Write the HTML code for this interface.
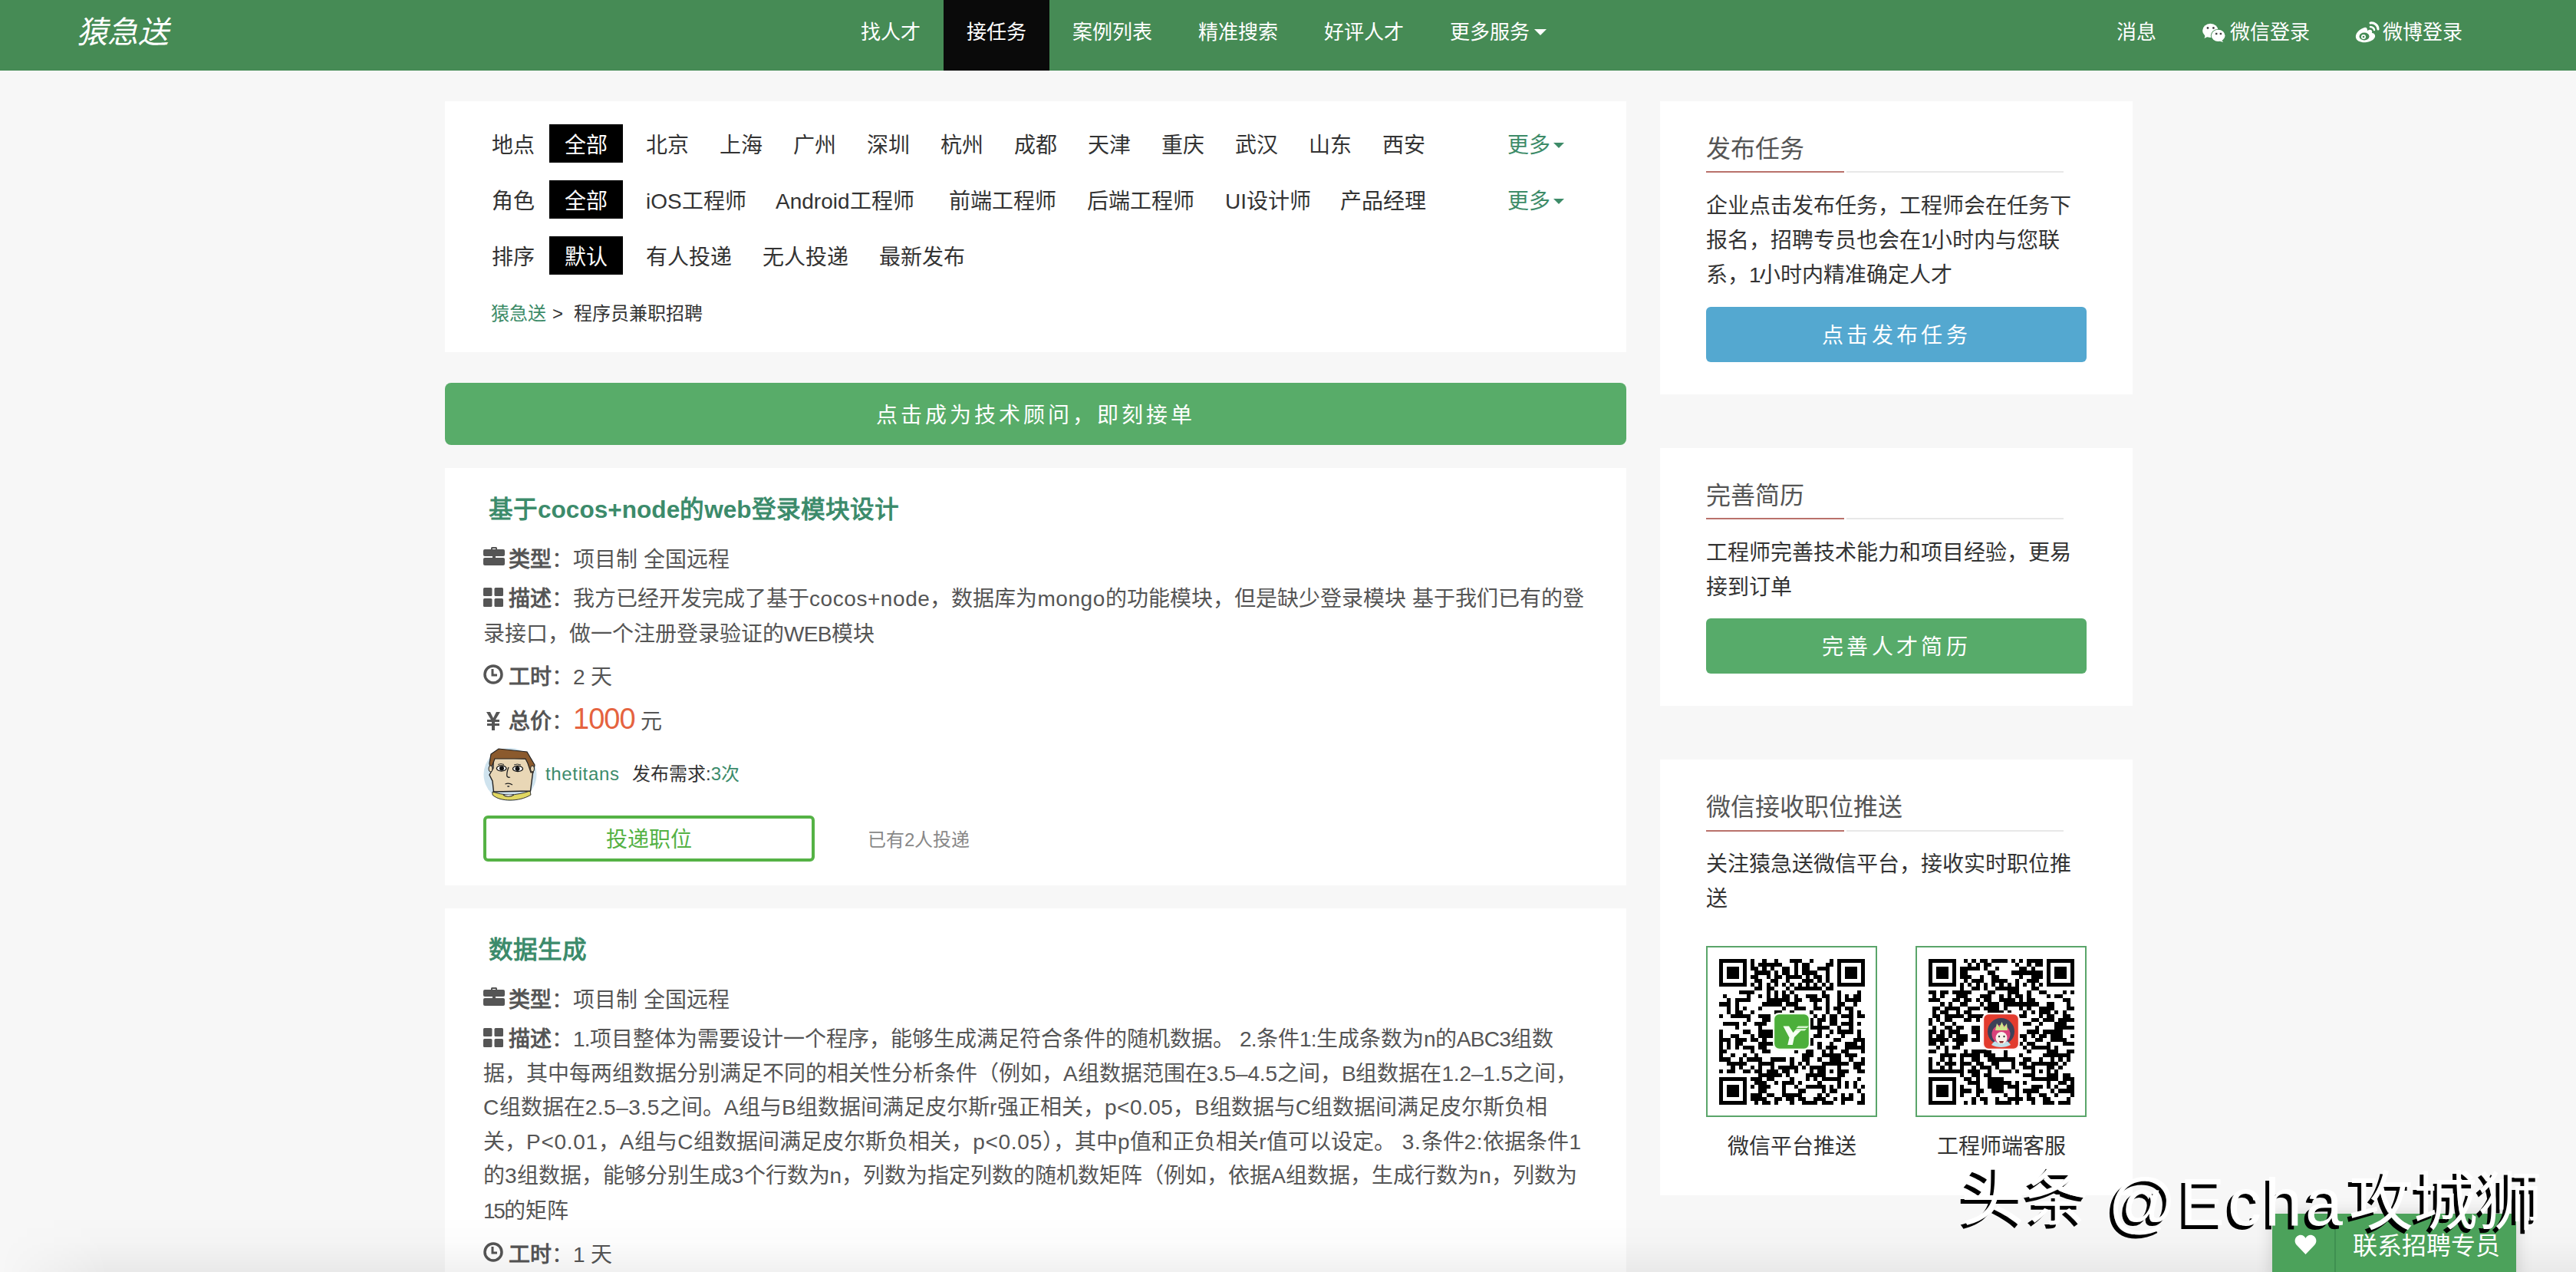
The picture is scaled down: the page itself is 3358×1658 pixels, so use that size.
<!DOCTYPE html>
<html lang="zh-CN">
<head>
<meta charset="utf-8">
<title>猿急送</title>
<style>
*{margin:0;padding:0;box-sizing:border-box}
html,body{width:3358px;height:1658px;overflow:hidden}
body{position:relative;background:#f7f7f7;font-family:"Liberation Sans",sans-serif;color:#333;font-size:28px}
.abs{position:absolute;white-space:nowrap}
#nav{position:absolute;left:0;top:0;width:3358px;height:92px;background:#468b55}
#logo{left:100px;top:12px;font-size:40px;line-height:60px;color:#fff;font-style:italic;font-weight:500}
.ni{position:absolute;top:0;height:92px;line-height:85px;font-size:26px;color:#fff;padding:0 30px}
.ni.act{background:#0a0a0a}
.caret{display:inline-block;width:0;height:0;border-left:8px solid transparent;border-right:8px solid transparent;border-top:8px solid #fff;vertical-align:middle;margin-left:6px;position:relative;top:-2px}
.card{position:absolute;background:#fff}
.fl{position:absolute;height:50px;line-height:56px;font-size:28px;color:#333}
.fl.act{background:#000;color:#fff;padding:0 20px}
.more{color:#3d8b68}
.more .caret{border-top-color:#3d8b68;border-left-width:7px;border-right-width:7px;border-top-width:7px;margin-left:4px}
#banner{position:absolute;left:580px;top:499px;width:1540px;height:81px;background:#58ac69;border-radius:8px;color:#fff;text-align:center;line-height:85px;font-size:28px;letter-spacing:4px}
.title{position:absolute;font-size:31.6px;font-weight:bold;color:#3c8b6b;white-space:nowrap}
.row{position:absolute;font-size:28px;color:#555;white-space:nowrap;line-height:44.8px}
.row b{color:#555}
.ln{position:absolute;font-size:28px;color:#555;line-height:44.8px;white-space:nowrap}
.ico{display:inline-block;vertical-align:middle;position:relative}
.price{color:#e5633f;font-size:38px;letter-spacing:-1px}
.side-t{position:absolute;left:60px;font-size:32px;color:#555;white-space:nowrap}
.side-l{position:absolute;left:60px;width:466px;height:2px;background:linear-gradient(to right,transparent 183px,#e8e8e8 183px)}
.side-l i{position:absolute;left:0;top:0;width:180px;height:2px;background:#b9716b}
.side-b{position:absolute;left:60px;width:490px;font-size:28px;line-height:45px;color:#333}
.wm{font-size:84px;line-height:110px;color:#fff;font-weight:400;text-shadow:-5px 5px 0 #000}
.btn{position:absolute;left:60px;width:496px;height:72px;border-radius:6px;color:#fff;text-align:center;line-height:76px;font-size:28px;letter-spacing:4.4px}
</style>
</head>
<body>
<div id="nav">
  <div id="logo" class="abs">猿急送</div>
  <div class="ni" style="left:1092px">找人才</div>
  <div class="ni act" style="left:1230px">接任务</div>
  <div class="ni" style="left:1368px">案例列表</div>
  <div class="ni" style="left:1532px">精准搜索</div>
  <div class="ni" style="left:1696px">好评人才</div>
  <div class="ni" style="left:1860px">更多服务<span class="caret"></span></div>
  <div class="ni" style="left:2729px">消息</div>
  <div class="ni" style="left:2841px"><svg class="ico" width="32" height="28" viewBox="0 0 32 28" style="top:-2px;margin-right:4px"><ellipse cx="10.4" cy="11.9" rx="10.3" ry="9.1" fill="#fff"/><path d="M4 17l-1.5 5 6-3z" fill="#fff"/><circle cx="7" cy="8.5" r="1.4" fill="#444"/><circle cx="14.4" cy="8.5" r="1.4" fill="#444"/><ellipse cx="20.6" cy="18.4" rx="9.8" ry="8.4" fill="#468b55"/><ellipse cx="20.6" cy="18.4" rx="8.9" ry="7.7" fill="#fff"/><path d="M25 24l2.2 3-5-1.6z" fill="#fff"/><rect x="17" y="14.8" width="2.4" height="2.4" fill="#444"/><rect x="22.7" y="14.8" width="2.4" height="2.4" fill="#444"/></svg>微信登录</div>
  <div class="ni" style="left:3039px"><svg class="ico" width="34" height="28" viewBox="0 0 34 28" style="top:-2px;margin-right:3px"><path d="M13 8C6 10 1 16 2 21c1 5 8 7 14 6 7-1 12-5 11-9-.5-2-2-3-4-3 1-3-1-5-4-4l-2 1c0-3-1-5-4-4z" fill="#fff"/><ellipse cx="13" cy="19.5" rx="6.5" ry="5" fill="#468b55"/><circle cx="12" cy="20" r="3" fill="#fff"/><circle cx="12" cy="20" r="1.3" fill="#468b55"/><path d="M21 2c5-1 10 3 10 8" stroke="#fff" stroke-width="3" fill="none" stroke-linecap="round"/><path d="M21 7c2.5 0 5 2 5 4" stroke="#fff" stroke-width="2.5" fill="none" stroke-linecap="round"/></svg>微博登录</div>
</div>

<!-- filter panel -->
<div class="card" style="left:580px;top:132px;width:1540px;height:327px"></div>
<div class="fl" style="left:641px;top:162px">地点</div>
<div class="fl act" style="left:716px;top:162px">全部</div>
<div class="fl" style="left:842px;top:162px">北京</div>
<div class="fl" style="left:938px;top:162px">上海</div>
<div class="fl" style="left:1034px;top:162px">广州</div>
<div class="fl" style="left:1130px;top:162px">深圳</div>
<div class="fl" style="left:1226px;top:162px">杭州</div>
<div class="fl" style="left:1322px;top:162px">成都</div>
<div class="fl" style="left:1418px;top:162px">天津</div>
<div class="fl" style="left:1514px;top:162px">重庆</div>
<div class="fl" style="left:1610px;top:162px">武汉</div>
<div class="fl" style="left:1706px;top:162px">山东</div>
<div class="fl" style="left:1802px;top:162px">西安</div>
<div class="fl more" style="left:1965px;top:162px">更多<span class="caret"></span></div>

<div class="fl" style="left:641px;top:235px">角色</div>
<div class="fl act" style="left:716px;top:235px">全部</div>
<div class="fl" style="left:842px;top:235px">iOS工程师</div>
<div class="fl" style="left:1011px;top:235px">Android工程师</div>
<div class="fl" style="left:1237px;top:235px">前端工程师</div>
<div class="fl" style="left:1417px;top:235px">后端工程师</div>
<div class="fl" style="left:1597px;top:235px">UI设计师</div>
<div class="fl" style="left:1747px;top:235px">产品经理</div>
<div class="fl more" style="left:1965px;top:235px">更多<span class="caret"></span></div>

<div class="fl" style="left:641px;top:308px">排序</div>
<div class="fl act" style="left:716px;top:308px">默认</div>
<div class="fl" style="left:842px;top:308px">有人投递</div>
<div class="fl" style="left:994px;top:308px">无人投递</div>
<div class="fl" style="left:1146px;top:308px">最新发布</div>

<div class="abs" style="left:640px;top:392px;font-size:24px;line-height:34px;color:#3d8b68">猿急送</div><div class="abs" style="left:720px;top:392px;font-size:24px;line-height:34px;color:#333">&gt;</div><div class="abs" style="left:748px;top:392px;font-size:24px;line-height:34px;color:#333">程序员兼职招聘</div>

<div id="banner">点击成为技术顾问，即刻接单</div>

<!-- job card 1 -->
<div class="card" style="left:580px;top:610px;width:1540px;height:544px"></div>
<div class="title" style="left:637px;top:638px">基于cocos+node的web登录模块设计</div>
<div class="row" style="left:630px;top:708px"><svg class="ico" width="28" height="25" viewBox="0 0 28 25" style="top:-7px;margin-right:5px"><path d="M10 4V2.5C10 1.5 10.8 1 11.8 1h4.4c1 0 1.8.5 1.8 1.5V4h-2V3h-4v1z" fill="#555"/><rect x="0" y="4" width="28" height="9" rx="2" fill="#555"/><rect x="0" y="15" width="28" height="10" rx="2" fill="#555"/><rect x="12" y="11" width="4" height="5" fill="#555"/></svg><b>类型</b>：项目制 全国远程</div>
<div class="ln" style="left:630px;top:759px"><svg class="ico" width="26" height="25" viewBox="0 0 26 25" style="top:-4px;margin-right:7px"><rect x="0" y="0" width="11.5" height="11" rx="1.5" fill="#555"/><rect x="14.5" y="0" width="11.5" height="11" rx="1.5" fill="#555"/><rect x="0" y="14" width="11.5" height="11" rx="1.5" fill="#555"/><rect x="14.5" y="14" width="11.5" height="11" rx="1.5" fill="#555"/></svg><b>描述</b>：<span id="c1l1">我方已经开发完成了基于<span style="letter-spacing:0.562px">cocos+node</span>，数据库为<span style="letter-spacing:0.562px">mongo</span>的功能模块，但是缺少登录模块<span style="letter-spacing:0.562px"> </span>基于我们已有的登</span></div>
<div class="ln" id="c1l2" style="left:630px;top:805px">录接口，做一个注册登录验证的<span style="letter-spacing:-0.667px">WEB</span>模块</div>
<div class="row" style="left:630px;top:861px"><svg class="ico" width="26" height="26" viewBox="0 0 26 26" style="top:-6px;margin-right:7px"><circle cx="13" cy="13" r="11" stroke="#555" stroke-width="3.5" fill="none"/><path d="M12 6v8h6" stroke="#555" stroke-width="3" fill="none"/></svg><b>工时</b>：2 天</div>
<div class="row" style="left:630px;top:915px"><svg class="ico" width="26" height="26" viewBox="0 0 26 26" style="top:-3px;margin-right:7px"><path d="M4 1h5l4 8 4-8h5l-6 10h5v3h-6v2h6v3h-6v6h-4v-6H5v-3h6v-2H5v-3h5z" fill="#555"/></svg><b>总价</b>：<span class="price">1000</span> 元</div>
<svg class="abs" style="left:630px;top:975px" width="70" height="70" viewBox="0 0 70 70"><circle cx="35" cy="34.5" r="34.5" fill="#cfe3ee"/><path d="M12 57c6 2 14 4 22 4s18-2 27-5l1 5c-8 5-18 7-27 7s-18-2-23-7z" fill="#e1d862" stroke="#333" stroke-width="1"/><path d="M26 61c3 3 10 3 14 0" stroke="#333" stroke-width="1.2" fill="#eee"/><path d="M13 12l44 2 8.5 11-4 31-48 1-1.5-14-4-8 5-9z" fill="#e9d7b6" stroke="#222" stroke-width="1.4"/><path d="M10 8L20 1l37 4 10 17-2 10-3 0-4-12-3-6-40 0-3 8-3 4-1-6z" fill="#8b5a2d" stroke="#222" stroke-width="1.2"/><ellipse cx="9.5" cy="27" rx="2.5" ry="4" fill="#e9d7b6" stroke="#222" stroke-width="1"/><ellipse cx="64" cy="27" rx="2.5" ry="4" fill="#e9d7b6" stroke="#222" stroke-width="1"/><ellipse cx="23.7" cy="26.5" rx="6.3" ry="3.6" fill="#fff" stroke="#111" stroke-width="1.3"/><ellipse cx="45" cy="27" rx="6.5" ry="3.6" fill="#fff" stroke="#111" stroke-width="1.3"/><circle cx="24" cy="26.5" r="3" fill="#111"/><circle cx="44.5" cy="27" r="3" fill="#111"/><path d="M19 21.5q4-2 8 0M40 22q4-2 9 0" stroke="#333" stroke-width="1" fill="none"/><path d="M33 25q-3 8-2 12q2 2 4 1" stroke="#222" stroke-width="1.3" fill="none"/><path d="M28.5 47q5-2 9.5 1" stroke="#222" stroke-width="1.2" fill="none"/><ellipse cx="32.7" cy="50" rx="1.6" ry="0.9" fill="#444"/></svg>
<div class="abs" style="left:711px;top:992px;font-size:24px;line-height:34px;color:#3c8b6b;letter-spacing:0.65px">thetitans</div><div class="abs" style="left:824px;top:992px;font-size:24px;line-height:34px;color:#333">发布需求:<span style="color:#3c8b6b">3次</span></div>
<div class="abs" style="left:630px;top:1063px;width:432px;height:60px;border:4px solid #55b245;border-radius:6px;color:#55b245;text-align:center;line-height:56px;font-size:28px">投递职位</div>
<div class="abs" style="left:1131px;top:1077px;font-size:24px;line-height:36px;color:#888">已有2人投递</div>

<!-- job card 2 -->
<div class="card" style="left:580px;top:1184px;width:1540px;height:600px"></div>
<div class="title" style="left:637px;top:1212px">数据生成</div>
<div class="row" style="left:630px;top:1282px"><svg class="ico" width="28" height="25" viewBox="0 0 28 25" style="top:-7px;margin-right:5px"><path d="M10 4V2.5C10 1.5 10.8 1 11.8 1h4.4c1 0 1.8.5 1.8 1.5V4h-2V3h-4v1z" fill="#555"/><rect x="0" y="4" width="28" height="9" rx="2" fill="#555"/><rect x="0" y="15" width="28" height="10" rx="2" fill="#555"/><rect x="12" y="11" width="4" height="5" fill="#555"/></svg><b>类型</b>：项目制 全国远程</div>
<div class="ln" style="left:630px;top:1333px"><svg class="ico" width="26" height="25" viewBox="0 0 26 25" style="top:-4px;margin-right:7px"><rect x="0" y="0" width="11.5" height="11" rx="1.5" fill="#555"/><rect x="14.5" y="0" width="11.5" height="11" rx="1.5" fill="#555"/><rect x="0" y="14" width="11.5" height="11" rx="1.5" fill="#555"/><rect x="14.5" y="14" width="11.5" height="11" rx="1.5" fill="#555"/></svg><b>描述</b>：<span id="c2l1"><span style="letter-spacing:-0.708px">1.</span>项目整体为需要设计一个程序，能够生成满足符合条件的随机数据。<span style="letter-spacing:-0.708px"> 2.</span>条件<span style="letter-spacing:-0.708px">1:</span>生成条数为<span style="letter-spacing:-0.708px">n</span>的<span style="letter-spacing:-0.708px">ABC3</span>组数</span></div>
<div class="ln" id="c2l2" style="left:630px;top:1378px">据，其中每两组数据分别满足不同的相关性分析条件（例如，<span style="letter-spacing:-0.150px">A</span>组数据范围在<span style="letter-spacing:-0.150px">3.5–4.5</span>之间，<span style="letter-spacing:-0.150px">B</span>组数据在<span style="letter-spacing:-0.150px">1.2–1.5</span>之间，</div>
<div class="ln" id="c2l3" style="left:630px;top:1422px"><span style="letter-spacing:0.511px">C</span>组数据在<span style="letter-spacing:0.511px">2.5–3.5</span>之间。<span style="letter-spacing:0.511px">A</span>组与<span style="letter-spacing:0.511px">B</span>组数据间满足皮尔斯<span style="letter-spacing:0.511px">r</span>强正相关，<span style="letter-spacing:0.511px">p&lt;0.05</span>，<span style="letter-spacing:0.511px">B</span>组数据与<span style="letter-spacing:0.511px">C</span>组数据间满足皮尔斯负相</div>
<div class="ln" id="c2l4" style="left:630px;top:1467px">关，<span style="letter-spacing:0.718px">P&lt;0.01</span>，<span style="letter-spacing:0.718px">A</span>组与<span style="letter-spacing:0.718px">C</span>组数据间满足皮尔斯负相关，<span style="letter-spacing:0.718px">p&lt;0.05</span>），其中<span style="letter-spacing:0.718px">p</span>值和正负相关<span style="letter-spacing:0.718px">r</span>值可以设定。<span style="letter-spacing:0.718px"> 3.</span>条件<span style="letter-spacing:0.718px">2:</span>依据条件<span style="letter-spacing:0.718px">1</span></div>
<div class="ln" id="c2l5" style="left:630px;top:1511px">的<span style="letter-spacing:0.200px">3</span>组数据，能够分别生成<span style="letter-spacing:0.200px">3</span>个行数为<span style="letter-spacing:0.200px">n</span>，列数为指定列数的随机数矩阵（例如，依据<span style="letter-spacing:0.200px">A</span>组数据，生成行数为<span style="letter-spacing:0.200px">n</span>，列数为</div>
<div class="ln" id="c2l6" style="left:630px;top:1557px"><span style="letter-spacing:-2.250px">15</span>的矩阵</div>
<div class="row" style="left:630px;top:1614px"><svg class="ico" width="26" height="26" viewBox="0 0 26 26" style="top:-6px;margin-right:7px"><circle cx="13" cy="13" r="11" stroke="#555" stroke-width="3.5" fill="none"/><path d="M12 6v8h6" stroke="#555" stroke-width="3" fill="none"/></svg><b>工时</b>：1 天</div>

<!-- sidebar -->
<div class="card" style="left:2164px;top:132px;width:616px;height:382px">
  <div class="side-t" style="top:36px">发布任务</div>
  <div class="side-l" style="top:91px"><i></i></div>
  <div class="side-b" style="top:114px">企业点击发布任务，工程师会在任务下报名，招聘专员也会在<span style="letter-spacing:-2.5px">1</span>小时内与您联系，<span style="letter-spacing:-2.5px">1</span>小时内精准确定人才</div>
  <div class="btn" style="top:268px;background:#54a8d0">点击发布任务</div>
</div>
<div class="card" style="left:2164px;top:584px;width:616px;height:336px">
  <div class="side-t" style="top:36px">完善简历</div>
  <div class="side-l" style="top:91px"><i></i></div>
  <div class="side-b" style="top:114px">工程师完善技术能力和项目经验，更易接到订单</div>
  <div class="btn" style="top:222px;background:#57ab6a">完善人才简历</div>
</div>
<div class="card" style="left:2164px;top:990px;width:616px;height:568px">
  <div class="side-t" style="top:36px">微信接收职位推送</div>
  <div class="side-l" style="top:92px"><i></i></div>
  <div class="side-b" style="top:114px">关注猿急送微信平台，接收实时职位推送</div>
  <div class="abs" style="left:60px;top:243px;width:223px;height:223px;border:2px solid #5aa56a;background:#fff">
    <svg width="190" height="190" viewBox="0 0 37 37" shape-rendering="crispEdges" style="position:absolute;left:15px;top:15px"><path d="M0 0h7v1h-7zM8 0h1v1h-1zM11 0h1v1h-1zM14 0h1v1h-1zM18 0h3v1h-3zM23 0h1v1h-1zM28 0h1v1h-1zM30 0h7v1h-7zM0 1h1v1h-1zM6 1h1v1h-1zM8 1h1v1h-1zM10 1h6v1h-6zM19 1h1v1h-1zM21 1h2v1h-2zM27 1h2v1h-2zM30 1h1v1h-1zM36 1h1v1h-1zM0 2h1v1h-1zM2 2h3v1h-3zM6 2h1v1h-1zM8 2h2v1h-2zM11 2h1v1h-1zM13 2h1v1h-1zM16 2h2v1h-2zM19 2h1v1h-1zM21 2h2v1h-2zM25 2h3v1h-3zM30 2h1v1h-1zM32 2h3v1h-3zM36 2h1v1h-1zM0 3h1v1h-1zM2 3h3v1h-3zM6 3h1v1h-1zM9 3h4v1h-4zM14 3h1v1h-1zM16 3h2v1h-2zM19 3h1v1h-1zM21 3h4v1h-4zM27 3h1v1h-1zM30 3h1v1h-1zM32 3h3v1h-3zM36 3h1v1h-1zM0 4h1v1h-1zM2 4h3v1h-3zM6 4h1v1h-1zM8 4h2v1h-2zM12 4h1v1h-1zM14 4h2v1h-2zM17 4h4v1h-4zM22 4h1v1h-1zM24 4h2v1h-2zM27 4h1v1h-1zM30 4h1v1h-1zM32 4h3v1h-3zM36 4h1v1h-1zM0 5h1v1h-1zM6 5h1v1h-1zM9 5h2v1h-2zM13 5h2v1h-2zM17 5h1v1h-1zM21 5h3v1h-3zM25 5h1v1h-1zM27 5h1v1h-1zM30 5h1v1h-1zM36 5h1v1h-1zM0 6h7v1h-7zM8 6h1v1h-1zM10 6h1v1h-1zM12 6h1v1h-1zM14 6h1v1h-1zM16 6h1v1h-1zM18 6h1v1h-1zM20 6h1v1h-1zM22 6h1v1h-1zM24 6h1v1h-1zM26 6h1v1h-1zM28 6h1v1h-1zM30 6h7v1h-7zM9 7h2v1h-2zM12 7h2v1h-2zM17 7h1v1h-1zM19 7h7v1h-7zM27 7h2v1h-2zM5 8h4v1h-4zM12 8h1v1h-1zM14 8h1v1h-1zM16 8h1v1h-1zM18 8h1v1h-1zM26 8h1v1h-1zM30 8h1v1h-1zM35 8h1v1h-1zM1 9h1v1h-1zM7 9h1v1h-1zM10 9h1v1h-1zM12 9h1v1h-1zM14 9h1v1h-1zM16 9h2v1h-2zM19 9h1v1h-1zM22 9h3v1h-3zM26 9h2v1h-2zM30 9h1v1h-1zM32 9h1v1h-1zM34 9h2v1h-2zM2 10h1v1h-1zM4 10h4v1h-4zM12 10h6v1h-6zM19 10h2v1h-2zM23 10h3v1h-3zM27 10h1v1h-1zM30 10h1v1h-1zM32 10h4v1h-4zM0 11h3v1h-3zM4 11h1v1h-1zM11 11h5v1h-5zM17 11h3v1h-3zM24 11h1v1h-1zM27 11h1v1h-1zM30 11h2v1h-2zM34 11h1v1h-1zM2 12h1v1h-1zM4 12h1v1h-1zM6 12h1v1h-1zM10 12h1v1h-1zM16 12h1v1h-1zM19 12h3v1h-3zM24 12h2v1h-2zM27 12h1v1h-1zM29 12h2v1h-2zM32 12h2v1h-2zM2 13h1v1h-1zM4 13h2v1h-2zM8 13h1v1h-1zM14 13h2v1h-2zM18 13h1v1h-1zM23 13h1v1h-1zM27 13h1v1h-1zM30 13h1v1h-1zM33 13h1v1h-1zM35 13h1v1h-1zM0 14h1v1h-1zM3 14h5v1h-5zM10 14h3v1h-3zM24 14h1v1h-1zM26 14h1v1h-1zM28 14h2v1h-2zM31 14h3v1h-3zM35 14h2v1h-2zM7 15h1v1h-1zM11 15h2v1h-2zM23 15h1v1h-1zM25 15h2v1h-2zM28 15h2v1h-2zM33 15h1v1h-1zM1 16h4v1h-4zM6 16h1v1h-1zM9 16h3v1h-3zM23 16h1v1h-1zM25 16h1v1h-1zM28 16h2v1h-2zM31 16h3v1h-3zM35 16h1v1h-1zM4 17h1v1h-1zM10 17h1v1h-1zM23 17h5v1h-5zM30 17h1v1h-1zM33 17h1v1h-1zM0 18h1v1h-1zM6 18h2v1h-2zM10 18h4v1h-4zM25 18h1v1h-1zM28 18h1v1h-1zM30 18h4v1h-4zM35 18h1v1h-1zM0 19h1v1h-1zM3 19h2v1h-2zM8 19h1v1h-1zM10 19h4v1h-4zM24 19h2v1h-2zM27 19h1v1h-1zM31 19h1v1h-1zM35 19h1v1h-1zM0 20h3v1h-3zM4 20h3v1h-3zM8 20h2v1h-2zM11 20h1v1h-1zM23 20h1v1h-1zM29 20h2v1h-2zM34 20h3v1h-3zM0 21h1v1h-1zM2 21h1v1h-1zM4 21h2v1h-2zM10 21h4v1h-4zM23 21h1v1h-1zM25 21h1v1h-1zM28 21h1v1h-1zM32 21h3v1h-3zM36 21h1v1h-1zM0 22h1v1h-1zM2 22h1v1h-1zM4 22h1v1h-1zM6 22h3v1h-3zM10 22h2v1h-2zM25 22h1v1h-1zM27 22h3v1h-3zM32 22h5v1h-5zM0 23h2v1h-2zM8 23h1v1h-1zM11 23h2v1h-2zM19 23h1v1h-1zM22 23h2v1h-2zM26 23h1v1h-1zM28 23h1v1h-1zM31 23h2v1h-2zM36 23h1v1h-1zM0 24h1v1h-1zM3 24h1v1h-1zM6 24h1v1h-1zM9 24h1v1h-1zM21 24h3v1h-3zM26 24h5v1h-5zM32 24h3v1h-3zM0 25h3v1h-3zM5 25h1v1h-1zM7 25h4v1h-4zM13 25h4v1h-4zM18 25h1v1h-1zM21 25h2v1h-2zM25 25h1v1h-1zM28 25h3v1h-3zM33 25h1v1h-1zM36 25h1v1h-1zM2 26h5v1h-5zM10 26h4v1h-4zM18 26h1v1h-1zM20 26h1v1h-1zM22 26h1v1h-1zM26 26h7v1h-7zM34 26h3v1h-3zM3 27h1v1h-1zM5 27h1v1h-1zM8 27h1v1h-1zM10 27h1v1h-1zM13 27h1v1h-1zM15 27h5v1h-5zM21 27h1v1h-1zM23 27h4v1h-4zM30 27h1v1h-1zM34 27h2v1h-2zM0 28h1v1h-1zM2 28h2v1h-2zM6 28h2v1h-2zM9 28h2v1h-2zM12 28h3v1h-3zM16 28h2v1h-2zM19 28h1v1h-1zM23 28h1v1h-1zM25 28h2v1h-2zM28 28h1v1h-1zM30 28h3v1h-3zM35 28h2v1h-2zM10 29h6v1h-6zM17 29h1v1h-1zM22 29h5v1h-5zM30 29h2v1h-2zM0 30h7v1h-7zM8 30h3v1h-3zM12 30h2v1h-2zM18 30h1v1h-1zM22 30h1v1h-1zM24 30h1v1h-1zM26 30h5v1h-5zM35 30h1v1h-1zM0 31h1v1h-1zM6 31h1v1h-1zM9 31h3v1h-3zM14 31h1v1h-1zM16 31h3v1h-3zM20 31h1v1h-1zM25 31h1v1h-1zM30 31h1v1h-1zM32 31h1v1h-1zM34 31h1v1h-1zM0 32h1v1h-1zM2 32h3v1h-3zM6 32h1v1h-1zM8 32h1v1h-1zM10 32h3v1h-3zM16 32h1v1h-1zM19 32h1v1h-1zM22 32h5v1h-5zM28 32h1v1h-1zM30 32h1v1h-1zM32 32h1v1h-1zM34 32h1v1h-1zM36 32h1v1h-1zM0 33h1v1h-1zM2 33h3v1h-3zM6 33h1v1h-1zM10 33h2v1h-2zM16 33h1v1h-1zM20 33h2v1h-2zM26 33h1v1h-1zM28 33h2v1h-2zM35 33h1v1h-1zM0 34h1v1h-1zM2 34h3v1h-3zM6 34h1v1h-1zM8 34h3v1h-3zM12 34h2v1h-2zM16 34h5v1h-5zM25 34h1v1h-1zM27 34h1v1h-1zM31 34h1v1h-1zM33 34h1v1h-1zM36 34h1v1h-1zM0 35h1v1h-1zM6 35h1v1h-1zM8 35h4v1h-4zM14 35h2v1h-2zM17 35h2v1h-2zM20 35h2v1h-2zM24 35h3v1h-3zM29 35h1v1h-1zM31 35h3v1h-3zM36 35h1v1h-1zM0 36h7v1h-7zM9 36h1v1h-1zM11 36h2v1h-2zM14 36h1v1h-1zM18 36h1v1h-1zM21 36h4v1h-4zM26 36h3v1h-3zM31 36h1v1h-1zM35 36h2v1h-2z" fill="#000"/></svg>
    <svg style="position:absolute;left:85px;top:85px" width="49" height="49" viewBox="0 0 49 49"><rect x="0" y="0" width="49" height="49" rx="8" fill="#f4fff0"/><rect x="2.2" y="2.2" width="44.6" height="44.6" rx="6" fill="#4caf3a"/><path d="M13.5 17.5h7.5l5.5 8.5 3-3.5h8l-9.5 9.5-2.2 10h-6.5l2.2-9.5z" fill="#f6fff4"/><path d="M33 17.5h14l-2.5 2.5h-14zM31 21h13l-2.5 2.5h-13z" fill="#d8f5d0"/></svg>
  </div>
  <div class="abs" style="left:333px;top:243px;width:223px;height:223px;border:2px solid #5aa56a;background:#fff">
    <svg width="190" height="190" viewBox="0 0 37 37" shape-rendering="crispEdges" style="position:absolute;left:15px;top:15px"><path d="M0 0h7v1h-7zM9 0h1v1h-1zM11 0h1v1h-1zM13 0h2v1h-2zM16 0h4v1h-4zM21 0h1v1h-1zM23 0h1v1h-1zM25 0h4v1h-4zM30 0h7v1h-7zM0 1h1v1h-1zM6 1h1v1h-1zM10 1h1v1h-1zM12 1h1v1h-1zM14 1h2v1h-2zM22 1h1v1h-1zM25 1h1v1h-1zM27 1h2v1h-2zM30 1h1v1h-1zM36 1h1v1h-1zM0 2h1v1h-1zM2 2h3v1h-3zM6 2h1v1h-1zM8 2h5v1h-5zM14 2h1v1h-1zM17 2h1v1h-1zM23 2h2v1h-2zM26 2h1v1h-1zM30 2h1v1h-1zM32 2h3v1h-3zM36 2h1v1h-1zM0 3h1v1h-1zM2 3h3v1h-3zM6 3h1v1h-1zM8 3h2v1h-2zM15 3h2v1h-2zM21 3h8v1h-8zM30 3h1v1h-1zM32 3h3v1h-3zM36 3h1v1h-1zM0 4h1v1h-1zM2 4h3v1h-3zM6 4h1v1h-1zM8 4h3v1h-3zM13 4h1v1h-1zM16 4h2v1h-2zM23 4h1v1h-1zM26 4h3v1h-3zM30 4h1v1h-1zM32 4h3v1h-3zM36 4h1v1h-1zM0 5h1v1h-1zM6 5h1v1h-1zM9 5h1v1h-1zM11 5h3v1h-3zM16 5h4v1h-4zM22 5h1v1h-1zM25 5h3v1h-3zM30 5h1v1h-1zM36 5h1v1h-1zM0 6h7v1h-7zM8 6h1v1h-1zM10 6h1v1h-1zM12 6h1v1h-1zM14 6h1v1h-1zM16 6h1v1h-1zM18 6h1v1h-1zM20 6h1v1h-1zM22 6h1v1h-1zM24 6h1v1h-1zM26 6h1v1h-1zM28 6h1v1h-1zM30 6h7v1h-7zM8 7h1v1h-1zM11 7h2v1h-2zM14 7h1v1h-1zM17 7h6v1h-6zM26 7h2v1h-2zM0 8h2v1h-2zM3 8h2v1h-2zM6 8h5v1h-5zM15 8h2v1h-2zM20 8h3v1h-3zM25 8h1v1h-1zM28 8h2v1h-2zM34 8h1v1h-1zM36 8h1v1h-1zM1 9h1v1h-1zM3 9h1v1h-1zM7 9h3v1h-3zM13 9h3v1h-3zM18 9h1v1h-1zM20 9h1v1h-1zM22 9h2v1h-2zM25 9h1v1h-1zM30 9h1v1h-1zM32 9h2v1h-2zM0 10h3v1h-3zM6 10h2v1h-2zM9 10h2v1h-2zM12 10h1v1h-1zM14 10h2v1h-2zM18 10h4v1h-4zM23 10h1v1h-1zM25 10h2v1h-2zM34 10h2v1h-2zM3 11h1v1h-1zM5 11h1v1h-1zM8 11h2v1h-2zM13 11h1v1h-1zM15 11h3v1h-3zM19 11h9v1h-9zM30 11h2v1h-2zM35 11h1v1h-1zM1 12h2v1h-2zM4 12h4v1h-4zM10 12h3v1h-3zM14 12h4v1h-4zM19 12h1v1h-1zM23 12h1v1h-1zM25 12h1v1h-1zM28 12h4v1h-4zM35 12h2v1h-2zM1 13h1v1h-1zM3 13h2v1h-2zM7 13h1v1h-1zM9 13h2v1h-2zM15 13h4v1h-4zM20 13h1v1h-1zM24 13h1v1h-1zM26 13h1v1h-1zM28 13h3v1h-3zM32 13h1v1h-1zM34 13h1v1h-1zM1 14h2v1h-2zM4 14h5v1h-5zM10 14h4v1h-4zM23 14h2v1h-2zM28 14h1v1h-1zM30 14h2v1h-2zM34 14h2v1h-2zM0 15h1v1h-1zM2 15h1v1h-1zM4 15h2v1h-2zM9 15h2v1h-2zM12 15h1v1h-1zM26 15h2v1h-2zM29 15h3v1h-3zM33 15h4v1h-4zM0 16h1v1h-1zM3 16h1v1h-1zM6 16h1v1h-1zM24 16h2v1h-2zM28 16h1v1h-1zM32 16h3v1h-3zM1 17h1v1h-1zM4 17h2v1h-2zM7 17h2v1h-2zM11 17h2v1h-2zM27 17h1v1h-1zM32 17h5v1h-5zM0 18h2v1h-2zM3 18h1v1h-1zM5 18h3v1h-3zM11 18h2v1h-2zM25 18h3v1h-3zM29 18h5v1h-5zM0 19h1v1h-1zM2 19h2v1h-2zM5 19h1v1h-1zM7 19h3v1h-3zM12 19h1v1h-1zM23 19h2v1h-2zM26 19h1v1h-1zM28 19h2v1h-2zM31 19h3v1h-3zM36 19h1v1h-1zM0 20h5v1h-5zM6 20h4v1h-4zM11 20h2v1h-2zM24 20h1v1h-1zM27 20h2v1h-2zM31 20h4v1h-4zM0 21h2v1h-2zM3 21h1v1h-1zM7 21h2v1h-2zM23 21h1v1h-1zM25 21h2v1h-2zM30 21h1v1h-1zM34 21h3v1h-3zM2 22h1v1h-1zM4 22h1v1h-1zM6 22h2v1h-2zM24 22h1v1h-1zM26 22h5v1h-5zM32 22h1v1h-1zM0 23h2v1h-2zM4 23h1v1h-1zM9 23h1v1h-1zM11 23h5v1h-5zM19 23h1v1h-1zM25 23h1v1h-1zM30 23h3v1h-3zM35 23h2v1h-2zM3 24h4v1h-4zM8 24h5v1h-5zM14 24h3v1h-3zM19 24h1v1h-1zM23 24h1v1h-1zM29 24h7v1h-7zM0 25h1v1h-1zM3 25h1v1h-1zM5 25h1v1h-1zM8 25h1v1h-1zM11 25h2v1h-2zM15 25h7v1h-7zM24 25h2v1h-2zM28 25h1v1h-1zM31 25h1v1h-1zM33 25h1v1h-1zM35 25h1v1h-1zM0 26h1v1h-1zM2 26h1v1h-1zM4 26h3v1h-3zM8 26h3v1h-3zM12 26h2v1h-2zM16 26h2v1h-2zM21 26h1v1h-1zM23 26h2v1h-2zM26 26h7v1h-7zM34 26h1v1h-1zM0 27h1v1h-1zM3 27h1v1h-1zM5 27h1v1h-1zM8 27h1v1h-1zM11 27h1v1h-1zM13 27h3v1h-3zM17 27h1v1h-1zM21 27h1v1h-1zM24 27h3v1h-3zM30 27h2v1h-2zM33 27h1v1h-1zM0 28h9v1h-9zM10 28h3v1h-3zM15 28h1v1h-1zM18 28h3v1h-3zM22 28h1v1h-1zM26 28h1v1h-1zM28 28h1v1h-1zM30 28h1v1h-1zM32 28h1v1h-1zM8 29h1v1h-1zM11 29h2v1h-2zM14 29h2v1h-2zM24 29h3v1h-3zM30 29h3v1h-3zM34 29h2v1h-2zM0 30h7v1h-7zM9 30h2v1h-2zM12 30h1v1h-1zM15 30h4v1h-4zM26 30h7v1h-7zM34 30h3v1h-3zM0 31h1v1h-1zM6 31h1v1h-1zM10 31h3v1h-3zM15 31h6v1h-6zM22 31h1v1h-1zM24 31h1v1h-1zM30 31h1v1h-1zM33 31h2v1h-2zM36 31h1v1h-1zM0 32h1v1h-1zM2 32h3v1h-3zM6 32h1v1h-1zM8 32h1v1h-1zM12 32h1v1h-1zM15 32h4v1h-4zM20 32h3v1h-3zM26 32h3v1h-3zM30 32h1v1h-1zM32 32h1v1h-1zM35 32h2v1h-2zM0 33h1v1h-1zM2 33h3v1h-3zM6 33h1v1h-1zM8 33h3v1h-3zM12 33h2v1h-2zM16 33h3v1h-3zM22 33h1v1h-1zM24 33h4v1h-4zM31 33h1v1h-1zM33 33h4v1h-4zM0 34h1v1h-1zM2 34h3v1h-3zM6 34h1v1h-1zM8 34h1v1h-1zM12 34h1v1h-1zM19 34h1v1h-1zM22 34h1v1h-1zM25 34h1v1h-1zM28 34h2v1h-2zM32 34h1v1h-1zM36 34h1v1h-1zM0 35h1v1h-1zM6 35h1v1h-1zM11 35h1v1h-1zM13 35h2v1h-2zM17 35h1v1h-1zM20 35h4v1h-4zM25 35h2v1h-2zM29 35h2v1h-2zM35 35h1v1h-1zM0 36h7v1h-7zM9 36h1v1h-1zM11 36h1v1h-1zM14 36h1v1h-1zM17 36h4v1h-4zM22 36h1v1h-1zM26 36h1v1h-1zM29 36h3v1h-3zM33 36h3v1h-3z" fill="#000"/></svg>
    <svg style="position:absolute;left:85px;top:85px" width="49" height="49" viewBox="0 0 49 49"><rect x="0" y="0" width="49" height="49" rx="8" fill="#fff4f4"/><rect x="2.2" y="2.2" width="44.6" height="44.6" rx="6" fill="#e23b2e"/><circle cx="24.5" cy="24.5" r="17.5" fill="#3d4058"/><path d="M12 42c3-5 8-7 12.5-7s9.5 2 12.5 7c-3.5 2-8 3-12.5 3s-9-1-12.5-3z" fill="#bfe0ea"/><circle cx="24.5" cy="28" r="12" fill="#d9417a"/><ellipse cx="25" cy="33" rx="7.5" ry="8" fill="#f8f2ea"/><path d="M17 23l2-9 3.5 5 3-7 3 7 3.5-5 1 9z" fill="#cfe58a"/><circle cx="22" cy="31" r="1.2" fill="#333"/><circle cx="28.5" cy="31" r="1.2" fill="#333"/><path d="M22 37h6l-1 2.5h-4z" fill="#8a3030"/></svg>
  </div>
  <div class="abs" style="left:88px;top:488px;font-size:28px;line-height:34px;color:#333">微信平台推送</div>
  <div class="abs" style="left:361px;top:488px;font-size:28px;line-height:34px;color:#333">工程师端客服</div>
</div>

<!-- bottom gradient -->
<div style="position:absolute;left:0;top:1585px;width:3358px;height:73px;background:linear-gradient(rgba(0,0,0,0),rgba(0,0,0,0.012) 45%,rgba(0,0,0,0.055));-webkit-mask-image:linear-gradient(to right,transparent,#000 140px)"></div>

<!-- float button -->
<div style="position:absolute;left:2962px;top:1582px;width:318px;height:90px;background:#4ca25b;box-shadow:0 0 20px rgba(0,0,0,0.15)">
  <div style="position:absolute;left:81px;top:0;width:2px;height:90px;background:#3f9050"></div>
  <svg style="position:absolute;left:29px;top:27px" width="29" height="26" viewBox="0 0 29 26"><path d="M14.5 26L3 14C-1 10 0 3 6 1c4-1 7 1 8.5 4C16 2 19 0 23 1c6 2 7 9 3 13z" fill="#fff"/></svg>
  <div class="abs" style="left:105px;top:23px;font-size:32px;line-height:38px;color:#fff;font-weight:500">联系招聘专员</div>
</div>

<!-- watermark -->
<div class="abs wm" style="left:2556px;top:1506px">头条</div>
<div class="abs wm" style="left:2748px;top:1512px;font-size:88px;letter-spacing:4px;font-weight:400">@Echa</div>
<div class="abs wm" style="left:3062px;top:1512px">攻城狮</div>
</body>
</html>
